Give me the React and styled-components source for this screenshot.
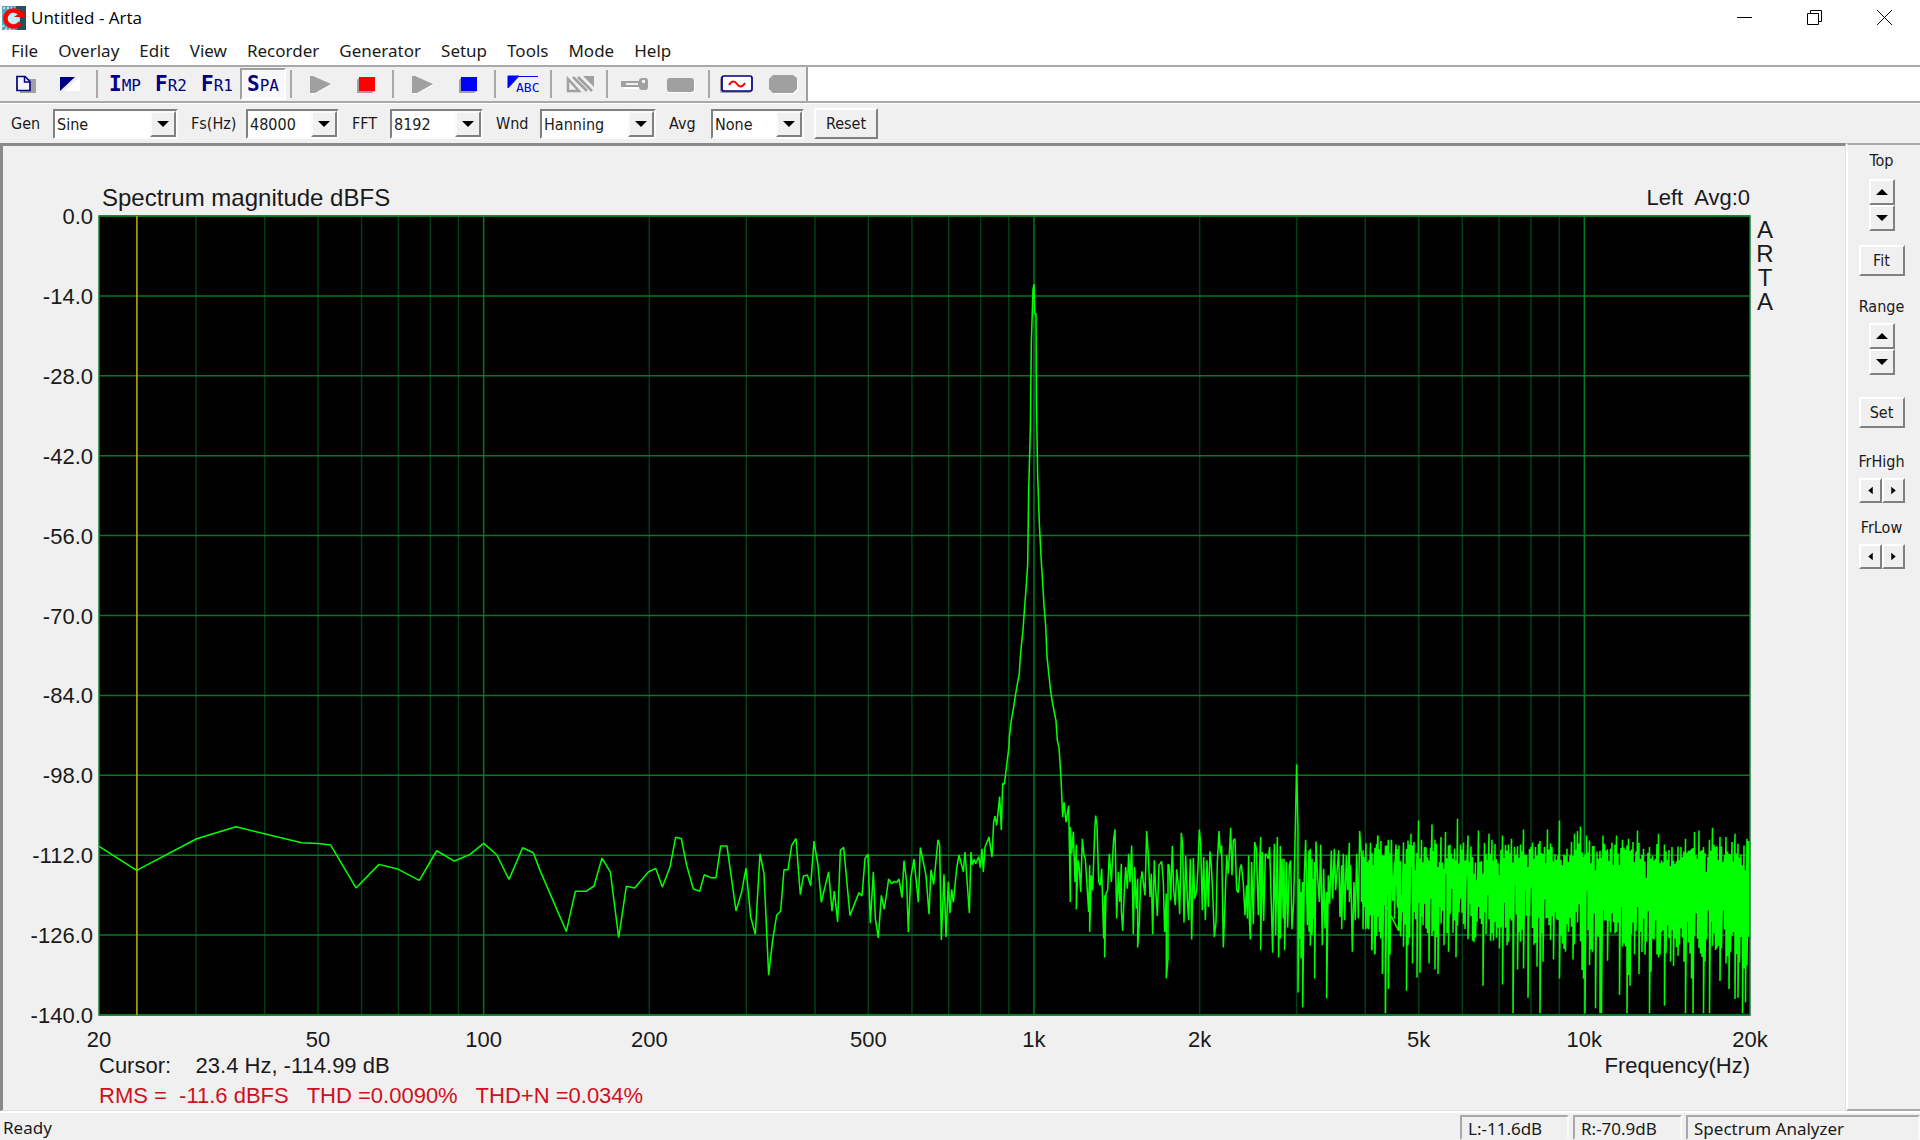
import React, { useState } from 'react';
import styled, { createGlobalStyle } from 'styled-components';

const GlobalStyle = createGlobalStyle`
  * {
    box-sizing: border-box;
  }

  body {
    margin: 0;
    background: #f0f0f0;
    color: #1a1a1a;
    font-family: 'Noto Sans', sans-serif;
  }

  button,
  select {
    font: inherit;
    color: inherit;
    margin: 0;
    padding: 0;
  }
`;

const Window = styled.div`
  display: flex;
  flex-direction: column;
  min-height: 100vh;
  background: #f0f0f0;
`;

const TitleBar = styled.header`
  display: flex;
  align-items: center;
  height: 36px;
  padding-left: 2px;
  background: white;
`;

const WindowTitle = styled.h1`
  flex: 1;
  margin: 0 0 0 5px;
  font-size: 17px;
  font-weight: 400;
  line-height: 36px;
  font-family: 'Open Sans', sans-serif;
  color: black;
`;

const CaptionButton = styled.button`
  display: flex;
  align-items: center;
  justify-content: center;
  width: 70px;
  height: 34px;
  border: none;
  background: none;
`;

const MenuBar = styled.nav`
  display: flex;
  align-items: center;
  gap: 20px;
  height: 29px;
  padding: 0 11px;
  background: white;
`;

const MenuLink = styled.a`
  color: #1a1a1a;
  font-size: 17px;
  line-height: 28px;
  text-decoration: none;
`;

const ToolBar = styled.div`
  display: flex;
  height: 38px;
  border-top: 2px solid #a8a8a8;
  border-bottom: 2px solid #a8a8a8;
  background: white;
`;

const ToolGroup = styled.div`
  display: flex;
  align-items: center;
  border-right: 2px solid #a0a0a0;
  background: #f0f0f0;
`;

const ToolButton = styled.button`
  display: flex;
  align-items: center;
  justify-content: center;
  width: 46px;
  height: 32px;
  border: 2px solid;
  border-color: ${(p) => (p.$pressed ? '#a0a0a0 white white #a0a0a0' : 'transparent')};
  background: ${(p) => (p.$pressed ? '#f8f8f8' : 'transparent')};
  color: #000080;
`;

const Separator = styled.span`
  width: 2px;
  height: 28px;
  margin: 0 4px;
  background: #a8a8a8;
`;

const ModeText = styled.span`
  display: block;
  padding-top: 2px;
  font-family: 'DejaVu Sans Mono', monospace;
  font-size: 16px;
  line-height: 20px;

  &::first-letter {
    font-size: 21px;
    font-weight: 700;
  }
`;

const ControlBar = styled.form`
  display: flex;
  align-items: center;
  gap: 10px;
  height: 40px;
  padding: 0 8px;
  border-top: 1px solid white;
  font-family: 'DejaVu Sans Condensed', sans-serif;
  font-size: 16px;
`;

const Field = styled.div`
  display: flex;
  align-items: center;
`;

const FieldLabel = styled.label`
  width: ${(p) => p.$width}px;
  padding-left: 3px;
`;

const SelectFrame = styled.div`
  position: relative;
  width: ${(p) => p.$width}px;
  height: 30px;
  border: 2px solid;
  border-color: #808080 #fbfbfb #fbfbfb #808080;
  background: white;
`;

const Select = styled.select`
  width: 100%;
  height: 100%;
  padding: 2px 0 0 2px;
  border: none;
  appearance: none;
  background: none;
`;

const DropArrow = styled.span`
  position: absolute;
  top: 0;
  right: 0;
  display: flex;
  align-items: center;
  justify-content: center;
  width: 26px;
  height: 26px;
  border: 2px solid;
  border-color: #fbfbfb #808080 #808080 #fbfbfb;
  background: #f0f0f0;
  pointer-events: none;
`;

const RaisedButton = styled.button`
  display: flex;
  align-items: center;
  justify-content: center;
  width: ${(p) => p.$width}px;
  height: ${(p) => p.$height || 31}px;
  border: 2px solid;
  border-color: white #808080 #808080 white;
  background: #f0f0f0;
`;

const Main = styled.main`
  display: flex;
  flex: 1;
`;

const ChartPanel = styled.section`
  display: flex;
  flex: 1;
  flex-direction: column;
  padding: 38px 95px 0 96px;
  border-top: 3px solid #8a8a8a;
  border-left: 3px solid #8a8a8a;
  border-right: 1px solid #e2e2e2;
  border-bottom: 1px solid #e2e2e2;
  font-family: 'Liberation Sans', sans-serif;
  font-size: 22px;
  line-height: 24px;
`;

const ChartHeader = styled.div`
  display: flex;
  align-items: center;
  justify-content: space-between;
  height: 32px;
  padding: 0 0 4px 3px;
  white-space: pre;
`;

const ChartTitle = styled.h2`
  margin: 0;
  font-size: 24px;
  font-weight: 400;
`;

const Plot = styled.svg`
  display: block;
  flex: 1;
  width: 100%;
  min-height: 300px;
  overflow: visible;
  background: black;
`;

const ReadoutRow = styled.div`
  display: flex;
  justify-content: space-between;
  height: 30px;
  white-space: pre;
`;

const ChartFooter = styled.div`
  padding-top: 39px;
`;

const Distortion = styled.div`
  height: 26px;
  color: #d01020;
  white-space: pre;
`;

const SidePanel = styled.aside`
  display: flex;
  flex-direction: column;
  width: 74px;
  border-top: 2px solid #a8a8a8;
  border-left: 2px solid white;
  border-bottom: 2px solid #a8a8a8;
  font-family: 'DejaVu Sans Condensed', sans-serif;
  font-size: 16px;
  line-height: 18px;
`;

const SideGroup = styled.div`
  display: flex;
  flex-direction: ${(p) => (p.$row ? 'row' : 'column')};
  align-items: center;
  justify-content: center;
  padding-right: 5px;
  padding-top: ${(p) => p.$gap}px;
`;

const StatusBar = styled.footer`
  display: flex;
  align-items: flex-end;
  gap: 4px;
  height: 29px;
  border-top: 2px solid white;
  font-size: 17px;
  line-height: 24px;
`;

const StatusMessage = styled.span`
  flex: 1;
  padding-left: 3px;
`;

const StatusPane = styled.span`
  width: ${(p) => p.$width}px;
  height: 25px;
  padding-left: 6px;
  border: 2px solid;
  border-color: #a8a8a8 #fafafa transparent #a8a8a8;
`;

const MENUS = ['File', 'Overlay', 'Edit', 'View', 'Recorder', 'Generator', 'Setup', 'Tools', 'Mode', 'Help'];

const FIELDS = [
  { id: 'gen', label: 'Gen', labelWidth: 45, width: 125, options: ['Sine', 'White PN', 'Pink PN'] },
  { id: 'fs', label: 'Fs(Hz)', labelWidth: 58, width: 93, options: ['48000', '44100', '96000'] },
  { id: 'fft', label: 'FFT', labelWidth: 41, width: 93, options: ['8192', '4096', '16384'] },
  { id: 'wnd', label: 'Wnd', labelWidth: 47, width: 116, options: ['Hanning', 'Uniform', 'Blackman'] },
  { id: 'avg', label: 'Avg', labelWidth: 45, width: 93, options: ['None', 'Linear', 'Exponential'] },
];

const FREQ_TICKS = [
  [20, '20'],
  [50, '50'],
  [100, '100'],
  [200, '200'],
  [500, '500'],
  [1000, '1k'],
  [2000, '2k'],
  [5000, '5k'],
  [10000, '10k'],
  [20000, '20k'],
];

const LEVEL_TICKS = [0, 1, 2, 3, 4, 5, 6, 7, 8, 9, 10].map((n) => n * -14);

const GRID_FREQS = [10, 100, 1000, 10000]
  .flatMap((decade) => [1, 2, 3, 4, 5, 6, 7, 8, 9].map((n) => n * decade))
  .filter((f) => f > 20 && f < 20000);

const freqToX = (f) => `${(Math.log10(f / 20) / 3) * 100}%`;
const levelToY = (db) => `${(db / -140) * 100}%`;

// Trace segments in plot units (4953 x 2403), each relative to its own origin
const SEGMENTS = [
  {
    x: -57,
    y: 1693,
    points: [
      57, 203, 170, 275, 350, 180, 468, 144, 665, 192, 715, 194, 752, 199, 828, 328, 897, 257, 955, 272,
      1018, 305, 1070, 216, 1123, 247, 1170, 227, 1211, 194, 1250, 228, 1287, 302, 1328, 207, 1360, 222,
    ],
  },
  {
    x: 1323,
    y: 1693,
    points: [
      0, 275, 79, 459, 106, 338, 138, 338, 162, 322, 186, 238, 211, 280, 236, 477, 259, 323, 284, 328,
      325, 280, 347, 269, 367, 325, 390, 265, 407, 175, 424, 180, 440, 260, 460, 331, 479, 338, 493, 288,
      512, 297, 528, 297, 542, 202, 561, 202, 588, 397, 605, 340, 618, 268, 632, 415, 646, 467, 660, 225,
      672, 285, 686, 590, 698, 485, 710, 410, 722, 397, 732, 273, 744, 273, 755, 200, 768, 179, 781, 348,
      790, 292, 802, 289, 812, 321, 822, 187, 834, 260, 844, 371, 856, 320, 866, 279, 876, 398, 883, 337,
      893, 430, 901, 215, 911, 206, 930, 411, 945, 372, 957, 342, 966, 352, 975, 240, 984, 226, 991, 434,
      1000, 279, 1006, 420, 1015, 478, 1024, 350, 1033, 392, 1046, 301, 1055, 315, 1063, 308, 1070, 312,
      1077, 301, 1086, 357, 1092, 246, 1100, 310, 1105, 461, 1112, 300, 1122, 241, 1135, 371, 1141, 206,
      1150, 250, 1158, 290, 1167, 407, 1173, 273, 1181, 317, 1194, 183, 1199, 200, 1204, 484, 1212, 287,
      1218, 475, 1225, 309, 1230, 403, 1235, 332, 1240, 371, 1250, 270, 1257, 229, 1270, 279, 1275, 220,
      1288, 403, 1293, 220, 1297, 258, 1303, 242, 1307, 255, 1316, 234, 1321, 267, 1326, 210, 1330, 280,
      1335, 205, 1347, 175, 1356, 235, 1361, 130, 1365, 112, 1370, 140, 1379, 53, 1384, 154, 1388, 14,
      1393, 16,
    ],
  },
  {
    x: 2583,
    y: 133,
    points: [
      147, 1462, 148, 1435, 153, 1390, 160, 1350, 166, 1310, 172, 1275, 178, 1243, 180, 1206, 184, 1160,
      189, 1112, 193, 1055, 198, 990, 203, 915, 206, 697, 211, 507, 214, 247, 219, 88, 222, 72, 224, 160,
      228, 160, 229, 408, 233, 647, 238, 790, 243, 890, 248, 970, 252, 1038, 257, 1097, 261, 1192,
      266, 1240, 272, 1297, 279, 1340, 288, 1385, 292, 1445, 297, 1465,
    ],
  },
  {
    x: 2583,
    y: 1573,
    points: [
      303, 118, 308, 235, 312, 190, 318, 250, 326, 200, 331, 490, 331, 265, 335, 345, 340, 278, 345, 430,
      349, 318, 349, 513, 354, 365, 358, 390, 362, 460, 367, 300, 372, 350, 376, 360, 386, 520, 389, 380,
      389, 580, 394, 410, 398, 455, 404, 280, 407, 230, 411, 260, 416, 430, 421, 440, 425, 390, 431, 600,
      434, 470, 434, 657, 438, 465, 443, 455, 448, 345, 454, 430, 461, 300, 465, 272, 470, 540, 475, 400,
      479, 490, 484, 375, 484, 515, 488, 577, 493, 455, 497, 385, 502, 450, 506, 345, 510, 430, 515, 320,
      520, 587, 524, 385, 529, 510, 533, 420, 533, 627, 538, 550, 542, 430, 546, 398, 555, 470, 560, 277,
      565, 350, 570, 475, 574, 405, 578, 587, 583, 365, 587, 450, 592, 532, 597, 380, 605, 368, 610, 430,
      614, 580, 619, 465, 619, 720, 624, 660, 624, 377, 628, 380, 632, 485, 637, 322, 641, 455, 646, 500,
      650, 392, 655, 440, 659, 527, 664, 282, 668, 320, 672, 552, 677, 352, 682, 480, 686, 545, 691, 360,
      695, 603, 700, 358, 704, 480, 710, 455, 714, 385, 718, 272, 722, 315, 727, 515, 731, 355, 736, 545,
      741, 365, 745, 505, 750, 338, 754, 380, 759, 485, 763, 595, 768, 550, 772, 370, 777, 277, 781, 345,
      785, 320, 790, 627, 795, 495, 800, 350, 805, 405, 812, 267, 816, 410, 820, 305, 825, 300, 830, 455,
      835, 462, 840, 390, 844, 377, 850, 437, 855, 530, 860, 440, 862, 540, 866, 350, 868, 540, 871, 603,
      875, 370, 880, 557, 884, 310, 889, 330, 895, 530, 898, 400, 902, 295, 902, 635, 907, 340, 911, 547,
      916, 345, 921, 350, 925, 360, 929, 325, 934, 500, 938, 643, 943, 315, 947, 590, 952, 295, 956, 657,
      961, 322, 961, 600, 966, 360, 970, 540, 972, 360, 974, 635, 979, 370, 983, 567, 988, 380, 992, 365,
      996, 572, 1001, 490, 1005, 310, 1010, 77, 1014, 275, 1014, 762, 1019, 420, 1019, 600, 1023, 460,
      1023, 660, 1028, 430, 1028, 807, 1033, 410, 1037, 303, 1042, 560, 1047, 335, 1047, 580, 1051, 330,
      1051, 622, 1056, 360, 1056, 590, 1060, 420, 1060, 540, 1064, 370, 1064, 720, 1068, 308, 1073, 420,
      1078, 490, 1082, 318, 1087, 620, 1091, 390, 1095, 570, 1100, 460, 1100, 780, 1105, 410, 1109, 495,
      1114, 335, 1118, 480, 1123, 330, 1127, 455, 1136, 335, 1140, 535, 1145, 380, 1145, 572, 1150, 345,
      1154, 545, 1159, 350, 1163, 455, 1168, 312, 1168, 490, 1172, 380, 1177, 640, 1182, 430, 1186, 545,
      1190, 345, 1195, 540, 1199, 277, 1204, 350, 1208, 495, 1213, 355, 1213, 500, 1217, 390, 1217, 572,
      1222, 370, 1222, 530, 1226, 400, 1226, 572, 1231, 395, 1231, 530, 1235, 390, 1235, 635, 1240, 380,
      1240, 530, 1244, 345, 1244, 648, 1249, 330, 1249, 530, 1253, 290, 1253, 535, 1258, 345, 1258, 580,
      1262, 335, 1262, 600, 1267, 350, 1267, 707, 1271, 350, 1271, 500, 1276, 360, 1276, 825, 1280, 320,
      1280, 460, 1285, 303, 1285, 750, 1290, 410, 1290, 648, 1294, 305, 1298, 487, 1303, 410, 1308, 318,
      1312, 500, 1316, 335, 1316, 577,
    ],
  },
];

// Above 4 kHz each column spans several bins, so only its peaks and nulls are listed
const NOISE_TOPS = [
  3, 235, 12, 235, 21, 255, 30, 192, 39, 260, 52, 170, 61, 187, 70, 245, 80, 200, 85, 183, 93, 183, 97, 290,
  106, 197, 115, 200, 124, 350, 133, 255, 142, 185, 151, 165, 160, 190, 165, 275, 174, 125, 183, 183,
  192, 205, 206, 245, 215, 137, 224, 183, 232, 265, 242, 175, 250, 270, 255, 160, 265, 200, 277, 240,
  282, 210, 291, 120, 300, 197, 313, 245, 322, 170, 331, 203, 340, 285, 349, 305, 354, 155, 367, 285,
  376, 225, 387, 165, 398, 183, 417, 290, 427, 170, 440, 215, 453, 180, 463, 205, 480, 197, 489, 152,
  503, 265, 512, 205, 525, 205, 530, 230, 539, 187, 550, 225, 561, 152, 575, 205, 597, 125, 606, 260,
  620, 210, 625, 250, 634, 190, 643, 165, 652, 157, 661, 143, 670, 235, 678, 170, 690, 185, 705, 275,
  715, 240, 727, 170, 740, 215, 750, 210, 762, 260, 768, 170, 780, 260, 786, 183, 805, 180, 817, 190,
  832, 155, 840, 240, 850, 210, 858, 297, 870, 205, 885, 240, 895, 165, 906, 245, 915, 197, 930, 262,
  937, 205, 945, 255, 953, 203, 962, 205, 976, 180, 990, 215, 1003, 160, 1011, 240, 1016, 155, 1030, 205,
  1038, 280, 1047, 183, 1056, 147, 1065, 205, 1079, 175, 1097, 175, 1106, 225, 1115, 190, 1124, 165,
  1133, 195, 1147, 260, 1156, 275, 1161, 180, 1166, 187,
];

const NOISE_BOTTOMS = [
  3, 370, 12, 385, 21, 450, 35, 515, 44, 527, 52, 412, 66, 587, 70, 380, 76, 705, 80, 350, 85, 632, 90, 527,
  93, 325, 99, 365, 106, 320, 115, 455, 124, 400, 130, 505, 138, 637, 143, 500, 151, 265, 156, 555,
  162, 400, 170, 597, 175, 372, 179, 583, 188, 440, 193, 375, 206, 555, 211, 360, 224, 573, 233, 587,
  238, 385, 250, 500, 255, 285, 265, 520, 273, 330, 288, 537, 300, 360, 310, 437, 319, 290, 330, 375,
  337, 487, 349, 430, 355, 385, 367, 622, 382, 350, 391, 487, 405, 430, 417, 510, 427, 618, 431, 372,
  440, 500, 450, 420, 458, 705, 463, 318, 472, 573, 481, 490, 490, 570, 494, 335, 503, 658, 513, 327,
  530, 565, 540, 705, 548, 550, 555, 362, 565, 440, 580, 543, 585, 400, 597, 600, 606, 495, 615, 520,
  625, 460, 637, 543, 648, 400, 657, 377, 666, 575, 670, 600, 675, 705, 679, 335, 688, 560, 697, 520,
  701, 405, 706, 690, 715, 475, 720, 705, 724, 705, 730, 395, 742, 547, 755, 405, 765, 465, 778, 650,
  782, 385, 792, 495, 800, 705, 805, 590, 809, 622, 823, 527, 832, 385, 837, 587, 850, 420, 860, 490,
  864, 398, 868, 705, 872, 580, 886, 425, 895, 537, 905, 460, 913, 682, 922, 440, 931, 550, 940, 563,
  945, 480, 953, 532, 963, 450, 972, 550, 976, 705, 981, 430, 990, 525, 995, 600, 999, 705, 1010, 405,
  1020, 525, 1030, 705, 1034, 550, 1043, 395, 1048, 705, 1055, 430, 1070, 510, 1079, 608, 1088, 395,
  1100, 555, 1106, 632, 1112, 520, 1124, 662, 1133, 658, 1142, 475, 1147, 705, 1151, 570, 1156, 672,
  1163, 560, 1168, 568,
];

const COLUMN = 4.5;

const byColumn = (pairs) => {
  const columns = {};
  for (let i = 0; i < pairs.length; i += 2) {
    columns[Math.round(pairs[i] / COLUMN)] = pairs[i + 1];
  }
  return columns;
};

const buildTrace = () => {
  const points = [];
  SEGMENTS.forEach((segment) => {
    for (let i = 0; i < segment.points.length; i += 2) {
      points.push(`${segment.x + segment.points[i]},${segment.y + segment.points[i + 1]}`);
    }
  });

  const tops = byColumn(NOISE_TOPS);
  const bottoms = byColumn(NOISE_BOTTOMS);
  let seed = 48000;
  const random = () => {
    seed = (seed * 16807) % 2147483647;
    return seed / 2147483647;
  };
  for (let i = 1; i < 260; i += 1) {
    const x = 3783 + i * COLUMN;
    const top = tops[i] ?? 190 + random() * 65;
    const bottom = bottoms[i] ?? 370 + i / 3 + random() * 100;
    points.push(`${x},${1693 + top}`, `${x},${1693 + Math.max(bottom, top)}`);
  }
  return points.join(' ');
};

const TRACE = buildTrace();

const SpectrumPlot = () => (
  <Plot role="img" aria-label="Spectrum magnitude">
    {GRID_FREQS.map((f) => (
      <line
        key={f}
        x1={freqToX(f)}
        x2={freqToX(f)}
        y1="0"
        y2="100%"
        stroke={[100, 1000, 10000].includes(f) ? '#007a24' : '#003f14'}
        strokeWidth="1.5"
      />
    ))}
    {LEVEL_TICKS.map((db) => (
      <line key={db} x1="0" x2="100%" y1={levelToY(db)} y2={levelToY(db)} stroke="#007a20" strokeWidth="1.5" />
    ))}
    <rect width="100%" height="100%" fill="none" stroke="#108030" strokeWidth="1.5" />
    <svg width="100%" height="100%" viewBox="0 0 4953 2403" preserveAspectRatio="none">
      <polyline points={TRACE} fill="none" stroke="#00ff00" strokeWidth="4.6" strokeLinejoin="bevel" />
    </svg>
    <line x1={freqToX(23.4375)} x2={freqToX(23.4375)} y1="0" y2="100%" stroke="#c0b400" strokeWidth="1.5" />
    <g fill="#1a1a1a">
      {LEVEL_TICKS.map((db) => (
        <text key={db} x="0" y={levelToY(db)} dx="-6" dy="8" textAnchor="end">
          {db === 0 ? '0.0' : db.toFixed(1)}
        </text>
      ))}
      {FREQ_TICKS.map(([f, label]) => (
        <text key={f} x={freqToX(f)} y="100%" dy="32" textAnchor="middle">
          {label}
        </text>
      ))}
      <g fontSize="24" textAnchor="middle">
        {['A', 'R', 'T', 'A'].map((letter, i) => (
          <text key={i} x="100%" y={22 + i * 24} dx="15">
            {letter}
          </text>
        ))}
      </g>
    </g>
  </Plot>
);

const AppIcon = () => (
  <svg width="24" height="24" viewBox="0 0 24 24" aria-hidden="true">
    <rect width="24" height="24" fill="#58a8b8" />
    <path d="M14 0H24V24H15Z" fill="#28505c" />
    <path d="M1 2H10M0 20H5M3 23H12" stroke="#a8e8f0" strokeWidth="2" strokeDasharray="2 2" />
    <circle cx="11" cy="13" r="7" fill="#c4eef2" />
    <path d="M18 8A8 8 0 1 0 18 17" fill="none" stroke="#ff0000" strokeWidth="4.5" />
    <path d="M12 11H23L22 4Z" fill="#ff0000" />
  </svg>
);

const Triangle = ({ direction, size = 12 }) => {
  const shapes = {
    up: 'M0 9L6 3L12 9Z',
    down: 'M0 3H12L6 9Z',
    left: 'M9 1V11L3 6Z',
    right: 'M3 1V11L9 6Z',
  };
  return (
    <svg width={size} height={size} viewBox="0 0 12 12" aria-hidden="true">
      <path d={shapes[direction]} fill="black" />
    </svg>
  );
};

const ToolIcon = ({ children }) => (
  <svg width="42" height="28" viewBox="0 0 42 28" aria-hidden="true">
    {children}
  </svg>
);

const NewIcon = () => (
  <ToolIcon>
    <path d="M22 9H34V23H18V20H29V13H22Z" fill="#a0a0a0" />
    <path d="M15 6.5H23L28 11.5V20.5H15Z" fill="#f4f4ff" stroke="#000080" strokeWidth="1.7" />
    <path d="M22.5 7V12H28" fill="none" stroke="#000080" strokeWidth="1.5" />
  </ToolIcon>
);

const OverlayIcon = () => (
  <ToolIcon>
    <path d="M12 7H27L12 21Z" fill="#000080" />
    <path d="M32 7V21H17Z" fill="white" />
  </ToolIcon>
);

const PlayIcon = () => (
  <ToolIcon>
    <path d="M13 8L34 15L14 25Z" fill="white" />
    <path d="M12 6H15L33 14L17 23H12Z" fill="#a0a0a0" />
  </ToolIcon>
);

const StopIcon = ({ color }) => (
  <ToolIcon>
    <path d="M13 10L16 7H31V21L28 23H13Z" fill="#a0a0a0" />
    <rect x="15" y="7" width="16" height="14" fill={color} />
  </ToolIcon>
);

const LabelIcon = () => (
  <ToolIcon>
    <path d="M6 6.5H36M6 6H17L6 18Z" fill="#0000ff" stroke="#0000ff" />
    <text x="14" y="22" fontSize="13" fontFamily="DejaVu Sans Mono, monospace" fill="#0000ff">
      ABC
    </text>
  </ToolIcon>
);

const HatchIcon = () => (
  <ToolIcon>
    <path d="M10 9V21H21Z" fill="#f0f0f0" stroke="#a0a0a0" strokeWidth="2.5" />
    <path d="M15 7L29 21M20 7L34 21" stroke="#a0a0a0" strokeWidth="2.5" />
    <path d="M25 6H36V17Z" fill="#a0a0a0" />
  </ToolIcon>
);

const KeyIcon = () => (
  <ToolIcon>
    <path d="M9 18H34" stroke="white" strokeWidth="2" />
    <rect x="7" y="11" width="20" height="6" fill="#a0a0a0" />
    <rect x="12" y="13" width="12" height="2" fill="#f0f0f0" />
    <rect x="25" y="8" width="9" height="12" rx="3" fill="#a0a0a0" />
    <rect x="28" y="10" width="3" height="3" fill="#f0f0f0" />
  </ToolIcon>
);

const PadIcon = () => (
  <ToolIcon>
    <rect x="8" y="9" width="27" height="14" rx="3" fill="white" />
    <rect x="7" y="8" width="27" height="14" rx="3" fill="#a0a0a0" />
  </ToolIcon>
);

const WaveIcon = () => (
  <ToolIcon>
    <rect x="4" y="7" width="31" height="16" rx="2" fill="#a0a0a0" />
    <rect x="6" y="6" width="30" height="15" rx="2" fill="white" stroke="#000080" strokeWidth="1.7" />
    <path d="M13 15C16 10 19 11 21 14S26 18 29 13" fill="none" stroke="#ff0000" strokeWidth="2" />
  </ToolIcon>
);

const OctagonIcon = () => (
  <ToolIcon>
    <path d="M12 6H31L36 11V20L32 24H13L9 19Z" fill="white" />
    <path d="M11 5H31L35 8V19L31 23H11L7 19V9Z" fill="#a0a0a0" />
  </ToolIcon>
);

const TOOL_GROUPS = [
  [
    { name: 'New', icon: <NewIcon /> },
    { name: 'Overlay', icon: <OverlayIcon /> },
  ],
  [
    { name: 'Impulse response', text: 'Imp' },
    { name: 'Frequency response 2', text: 'Fr2' },
    { name: 'Frequency response 1', text: 'Fr1' },
    { name: 'Spectrum analyzer', text: 'Spa', pressed: true },
  ],
  [
    { name: 'Record', icon: <PlayIcon /> },
    { name: 'Stop recording', icon: <StopIcon color="#ff0000" /> },
  ],
  [
    { name: 'Generate', icon: <PlayIcon /> },
    { name: 'Stop generator', icon: <StopIcon color="#0000ff" /> },
  ],
  [{ name: 'Label', icon: <LabelIcon /> }],
  [{ name: 'Smoothing', icon: <HatchIcon /> }],
  [
    { name: 'Calibrate', icon: <KeyIcon /> },
    { name: 'Devices', icon: <PadIcon /> },
  ],
  [
    { name: 'Signal generator', icon: <WaveIcon /> },
    { name: 'Time record', icon: <OctagonIcon /> },
  ],
];

const Spinner = ({ label }) => (
  <>
    <RaisedButton type="button" $width={26} $height={26} aria-label={`${label} up`}>
      <Triangle direction="up" />
    </RaisedButton>
    <RaisedButton type="button" $width={26} $height={26} aria-label={`${label} down`}>
      <Triangle direction="down" />
    </RaisedButton>
  </>
);

const Stepper = ({ label }) => (
  <SideGroup $row $gap={7}>
    <RaisedButton type="button" $width={23} $height={25} aria-label={`${label} left`}>
      <Triangle direction="left" size={9} />
    </RaisedButton>
    <RaisedButton type="button" $width={23} $height={25} aria-label={`${label} right`}>
      <Triangle direction="right" size={9} />
    </RaisedButton>
  </SideGroup>
);

const App = () => {
  const [values, setValues] = useState({ gen: 'Sine', fs: '48000', fft: '8192', wnd: 'Hanning', avg: 'None' });

  const handleChange = (event) => {
    setValues({ ...values, [event.target.id]: event.target.value });
  };

  return (
    <Window>
      <GlobalStyle />
      <TitleBar>
        <AppIcon />
        <WindowTitle>Untitled - Arta</WindowTitle>
        <CaptionButton aria-label="Minimize">
          <svg width="16" height="16" viewBox="0 0 16 16">
            <path d="M0 7.5H15" stroke="black" />
          </svg>
        </CaptionButton>
        <CaptionButton aria-label="Restore">
          <svg width="16" height="16" viewBox="0 0 16 16" fill="none" stroke="black">
            <path d="M0.5 3.5H11.5V14.5H0.5ZM3.5 3.5V0.5H14.5V11.5H11.5" />
          </svg>
        </CaptionButton>
        <CaptionButton aria-label="Close">
          <svg width="16" height="16" viewBox="0 0 16 16">
            <path d="M0 0L15 15M15 0L0 15" stroke="black" />
          </svg>
        </CaptionButton>
      </TitleBar>

      <MenuBar>
        {MENUS.map((menu) => (
          <MenuLink key={menu} href="#">
            {menu}
          </MenuLink>
        ))}
      </MenuBar>

      <ToolBar>
        <ToolGroup>
          {TOOL_GROUPS.map((group, i) => (
            <React.Fragment key={group[0].name}>
              {i > 0 && <Separator />}
              {group.map((tool) => (
                <ToolButton key={tool.name} type="button" aria-label={tool.name} $pressed={tool.pressed}>
                  {tool.text ? <ModeText>{tool.text[0] + tool.text.slice(1).toUpperCase()}</ModeText> : tool.icon}
                </ToolButton>
              ))}
            </React.Fragment>
          ))}
        </ToolGroup>
      </ToolBar>

      <ControlBar>
        {FIELDS.map((field) => (
          <Field key={field.id}>
            <FieldLabel htmlFor={field.id} $width={field.labelWidth}>
              {field.label}
            </FieldLabel>
            <SelectFrame $width={field.width}>
              <Select id={field.id} value={values[field.id]} onChange={handleChange}>
                {field.options.map((option) => (
                  <option key={option}>{option}</option>
                ))}
              </Select>
              <DropArrow>
                <Triangle direction="down" />
              </DropArrow>
            </SelectFrame>
          </Field>
        ))}
        <RaisedButton type="button" $width={64}>
          Reset
        </RaisedButton>
      </ControlBar>

      <Main>
        <ChartPanel>
          <ChartHeader>
            <ChartTitle>Spectrum magnitude dBFS</ChartTitle>
            <span>Left  Avg:0</span>
          </ChartHeader>
          <SpectrumPlot />
          <ChartFooter>
            <ReadoutRow>
              <span>Cursor:    23.4 Hz, -114.99 dB</span>
              <span>Frequency(Hz)</span>
            </ReadoutRow>
            <Distortion>RMS =  -11.6 dBFS   THD =0.0090%   THD+N =0.034%</Distortion>
          </ChartFooter>
        </ChartPanel>

        <SidePanel>
          <SideGroup $gap={7}>Top</SideGroup>
          <SideGroup $gap={9}>
            <Spinner label="Top" />
          </SideGroup>
          <SideGroup $gap={14}>
            <RaisedButton type="button" $width={46}>
              Fit
            </RaisedButton>
          </SideGroup>
          <SideGroup $gap={22}>Range</SideGroup>
          <SideGroup $gap={7}>
            <Spinner label="Range" />
          </SideGroup>
          <SideGroup $gap={22}>
            <RaisedButton type="button" $width={46}>
              Set
            </RaisedButton>
          </SideGroup>
          <SideGroup $gap={25}>FrHigh</SideGroup>
          <Stepper label="FrHigh" />
          <SideGroup $gap={16}>FrLow</SideGroup>
          <Stepper label="FrLow" />
        </SidePanel>
      </Main>

      <StatusBar>
        <StatusMessage>Ready</StatusMessage>
        <StatusPane $width={109}>L:-11.6dB</StatusPane>
        <StatusPane $width={109}>R:-70.9dB</StatusPane>
        <StatusPane $width={234}>Spectrum Analyzer</StatusPane>
      </StatusBar>
    </Window>
  );
};

export default App;
